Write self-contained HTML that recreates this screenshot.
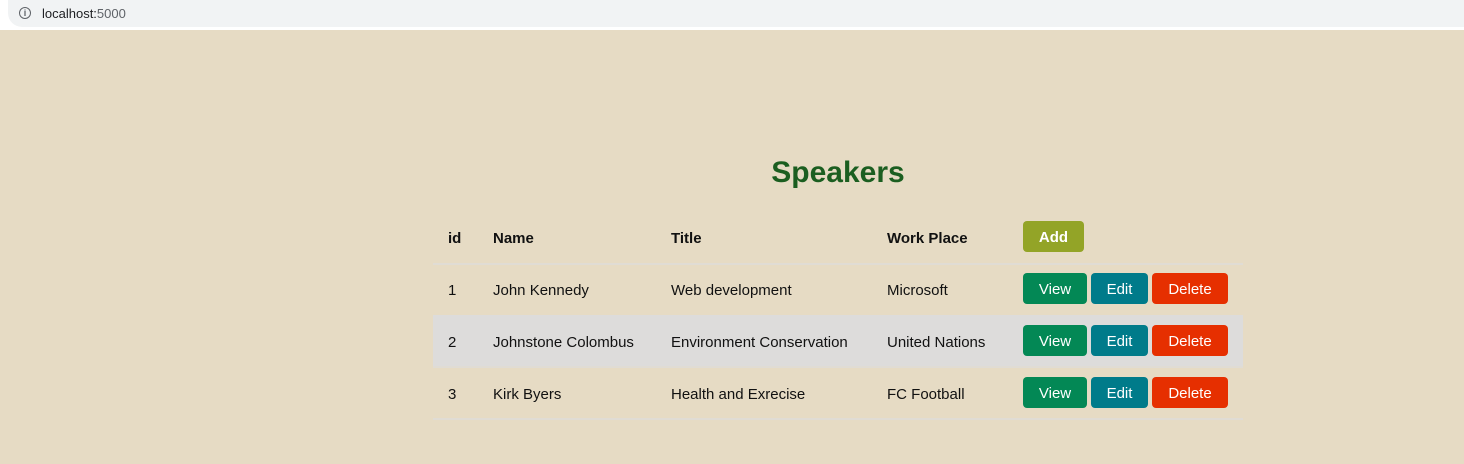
<!DOCTYPE html>
<html><head><style>
body{margin:0;width:1464px;height:464px;background:#e6dbc4;font-family:"Liberation Sans",sans-serif;position:relative;overflow:hidden}
.bar{position:absolute;left:0;top:0;width:1464px;height:30px;background:#fff}
.pill{position:absolute;left:8px;top:0;width:1456px;height:27px;background:#f1f3f4;border-radius:0 0 0 14px}
.url{position:absolute;left:42px;top:6px;font-size:13px;color:#202124}
.info{position:absolute;left:19px;top:7px;width:10px;height:10px;border:1.5px solid #5f6368;border-radius:50%;font-size:9px;line-height:10px;text-align:center;color:#5f6368;font-weight:bold}
h1{position:absolute;left:0;width:1676px;top:156px;margin:0;text-align:center;font-size:30px;color:#1b5e20;font-weight:bold}
.t{position:absolute;font-size:15px;color:#111;white-space:nowrap}
.b{font-weight:bold}
.row{position:absolute;left:433px;width:810px;height:51px;border-bottom:2px solid #e0dcd4}
.btn{position:absolute;height:31px;border-radius:4px;color:#fff;font-size:15px;line-height:33px;text-align:center}
</style></head><body>
<div class="bar"><div class="pill"></div><div class="info">i</div><div class="url">localhost:<span style="color:#5f6368">5000</span></div></div>
<h1>Speakers</h1>
<div class="row" style="top:212px"></div>
<div class="row" style="top:264px"></div>
<div class="row" style="top:315px;background:#dddcdb"></div>
<div class="row" style="top:367px"></div>
<div class="t b" style="left:448px;top:230px">id</div>
<div class="t b" style="left:493px;top:230px">Name</div>
<div class="t b" style="left:671px;top:230px">Title</div>
<div class="t b" style="left:887px;top:230px">Work Place</div>
<div class="btn b" style="left:1023px;top:221px;width:61px;background:#93a427">Add</div>

<div class="t" style="left:448px;top:282px">1</div>
<div class="t" style="left:493px;top:282px">John Kennedy</div>
<div class="t" style="left:671px;top:282px">Web development</div>
<div class="t" style="left:887px;top:282px">Microsoft</div>

<div class="t" style="left:448px;top:334px">2</div>
<div class="t" style="left:493px;top:334px">Johnstone Colombus</div>
<div class="t" style="left:671px;top:334px">Environment Conservation</div>
<div class="t" style="left:887px;top:334px">United Nations</div>

<div class="t" style="left:448px;top:386px">3</div>
<div class="t" style="left:493px;top:386px">Kirk Byers</div>
<div class="t" style="left:671px;top:386px">Health and Exrecise</div>
<div class="t" style="left:887px;top:386px">FC Football</div>

<div class="btn" style="left:1023px;top:273px;width:64px;background:#038855">View</div>
<div class="btn" style="left:1091px;top:273px;width:57px;background:#007b8a">Edit</div>
<div class="btn" style="left:1152px;top:273px;width:76px;background:#e62f00">Delete</div>
<div class="btn" style="left:1023px;top:325px;width:64px;background:#038855">View</div>
<div class="btn" style="left:1091px;top:325px;width:57px;background:#007b8a">Edit</div>
<div class="btn" style="left:1152px;top:325px;width:76px;background:#e62f00">Delete</div>
<div class="btn" style="left:1023px;top:377px;width:64px;background:#038855">View</div>
<div class="btn" style="left:1091px;top:377px;width:57px;background:#007b8a">Edit</div>
<div class="btn" style="left:1152px;top:377px;width:76px;background:#e62f00">Delete</div>
</body></html>
